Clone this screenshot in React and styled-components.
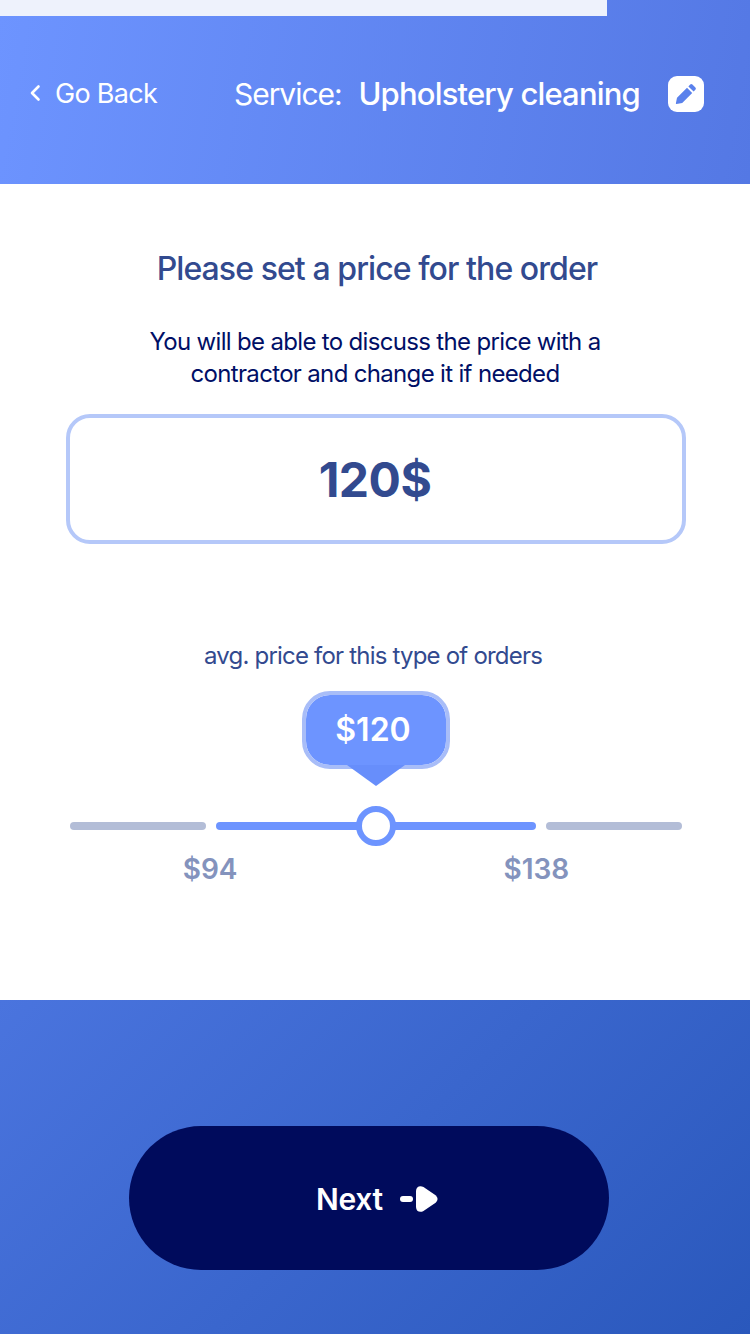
import React from "react";
import styled, { createGlobalStyle } from "styled-components";

const GlobalStyle = createGlobalStyle`
  html, body {
    margin: 0;
    padding: 0;
    background: #fff;
  }
  * {
    box-sizing: border-box;
  }
`;

export default function App() {
  return (
    <>
      <GlobalStyle />
      <Page>
        <Header>
          <TopStrip />
          <BackLink>
            <svg width="14" height="20" viewBox="0 0 14 20" fill="none">
              <path
                d="M10.5 3.5 L4 10 L10.5 16.5"
                stroke="#fff"
                strokeWidth="2.6"
                strokeLinecap="round"
                strokeLinejoin="round"
              />
            </svg>
            <span>Go Back</span>
          </BackLink>
          <Service>
            <ServiceLabel>Service:</ServiceLabel>
            <ServiceName>Upholstery cleaning</ServiceName>
          </Service>
          <EditButton>
            <svg width="24" height="24" viewBox="0 0 24 24">
              <path
                d="M16.2 2.6 a1.6 1.6 0 0 1 2.2 0 l3 3 a1.6 1.6 0 0 1 0 2.2 L19.6 9.6 L14.4 4.4 Z M13 5.8 L18.2 11 L8.2 21 L2.6 22 a.6.6 0 0 1 -.7 -.7 L3 15.8 Z"
                fill="#5a81ec"
              />
            </svg>
          </EditButton>
        </Header>

        <Main>
          <Title>Please set a price for the order</Title>
          <Hint>
            You will be able to discuss the price with a
            <br />
            contractor and change it if needed
          </Hint>
          <PriceBox>120$</PriceBox>
          <AvgLabel>avg. price for this type of orders</AvgLabel>
          <Bubble>$120</Bubble>
          <Slider>
            <Segment />
            <Segment $active $wide>
              <Thumb />
            </Segment>
            <Segment />
          </Slider>
          <RangeLabels>
            <RangeLabel>$94</RangeLabel>
            <RangeLabel>$138</RangeLabel>
          </RangeLabels>
        </Main>

        <Footer>
          <NextButton>
            <span>Next</span>
            <svg width="38" height="28" viewBox="0 0 38 28">
              <rect x="0" y="11" width="13" height="6" rx="3" fill="#fff" />
              <path
                d="M16 6 C16 1.5 20 0 23.5 2 L34.5 9.5 C38.5 12.3 38.5 15.7 34.5 18.5 L23.5 26 C20 28 16 26.5 16 22 Z"
                fill="#fff"
              />
            </svg>
          </NextButton>
        </Footer>
      </Page>
    </>
  );
}

const Page = styled.div`
  display: flex;
  flex-direction: column;
  width: 750px;
  height: 1334px;
  overflow: hidden;
  font-family: Inter, "Noto Sans", sans-serif;
`;

const Header = styled.header`
  position: relative;
  display: flex;
  align-items: center;
  height: 184px;
  padding: 2px 46px 0 28px;
  color: #fff;
  background: linear-gradient(100deg, #6d94ff 0%, #5478e4 100%);
`;

const TopStrip = styled.div`
  position: absolute;
  top: 0;
  left: 0;
  width: 607px;
  height: 16px;
  background: #eef2fc;
`;

const BackLink = styled.div`
  display: flex;
  align-items: center;
  gap: 13px;
  width: 206px;
  font-size: 27px;
  letter-spacing: -0.7px;
`;

const Service = styled.div`
  display: flex;
  align-items: baseline;
  gap: 17px;
  font-size: 30px;
  letter-spacing: -1.05px;
`;

const ServiceLabel = styled.span`
  font-weight: 400;
`;

const ServiceName = styled.span`
  font-size: 31px;
  font-weight: 500;
  letter-spacing: -0.83px;
`;

const EditButton = styled.div`
  display: flex;
  align-items: center;
  justify-content: center;
  width: 36px;
  height: 36px;
  margin-top: 2px;
  margin-left: auto;
  border-radius: 9px;
  background: #fff;
`;

const Main = styled.main`
  display: flex;
  flex-direction: column;
  align-items: center;
  height: 816px;
  padding: 64px 0 0 2px;
  background: #fff;
`;

const Title = styled.h1`
  margin: 0 0 0 2px;
  font-size: 32px;
  line-height: 42px;
  font-weight: 500;
  letter-spacing: -0.92px;
  color: #324a8f;
`;

const Hint = styled.p`
  margin: 36px 0 0 -2px;
  font-size: 24px;
  line-height: 32px;
  letter-spacing: -0.67px;
  text-align: center;
  color: #000f66;
`;

const PriceBox = styled.div`
  display: flex;
  align-items: center;
  justify-content: center;
  width: 620px;
  height: 130px;
  margin-top: 24px;
  padding: 0 2px 0 0;
  border: 4px solid #b5c8f9;
  border-radius: 24px;
  font-size: 48px;
  font-weight: 700;
  letter-spacing: -0.5px;
  color: #324a8f;
`;

const AvgLabel = styled.div`
  margin: 96px 0 0 -6px;
  font-size: 24px;
  line-height: 32px;
  letter-spacing: -0.8px;
  color: #324a8f;
`;

const Bubble = styled.div`
  position: relative;
  display: flex;
  align-items: center;
  justify-content: center;
  width: 148px;
  height: 78px;
  margin-top: 19px;
  padding: 0 6px 2px 0;
  border: 4px solid #a8bdf8;
  border-radius: 28px;
  background: #6d94ff;
  background-clip: padding-box;
  font-size: 32px;
  font-weight: 600;
  color: #fff;

  &::after {
    content: "";
    position: absolute;
    left: 41px;
    bottom: -21px;
    border-style: solid;
    border-width: 21px 29px 0;
    border-color: #678efb transparent transparent;
  }
`;

const Slider = styled.div`
  display: flex;
  gap: 10px;
  width: 612px;
  margin-top: 53px;
`;

const Segment = styled.div`
  position: relative;
  flex: ${(p) => (p.$wide ? "0 0 320px" : "1")};
  height: 8px;
  border-radius: 4px;
  background: ${(p) => (p.$active ? "#6d94ff" : "#b3bdd7")};
`;

const Thumb = styled.div`
  position: absolute;
  top: -16px;
  left: 140px;
  width: 40px;
  height: 40px;
  border: 6px solid #6d94ff;
  border-radius: 50%;
  background: #fff;
`;

const RangeLabels = styled.div`
  display: flex;
  gap: 266px;
  margin-top: 22px;
`;

const RangeLabel = styled.div`
  font-size: 28px;
  line-height: 34px;
  font-weight: 600;
  color: #8493bd;
`;

const Footer = styled.footer`
  display: flex;
  justify-content: center;
  flex: 1;
  padding: 126px 12px 0 0;
  background: linear-gradient(135deg, #4a74de 0%, #2a58bc 100%);
`;

const NextButton = styled.button`
  display: flex;
  align-items: center;
  justify-content: center;
  gap: 17px;
  width: 480px;
  height: 144px;
  padding: 2px 0 0 16px;
  border: none;
  border-radius: 72px;
  background: #000b5c;
  font-family: inherit;
  font-size: 30px;
  font-weight: 600;
  letter-spacing: -0.3px;
  color: #fff;
`;
